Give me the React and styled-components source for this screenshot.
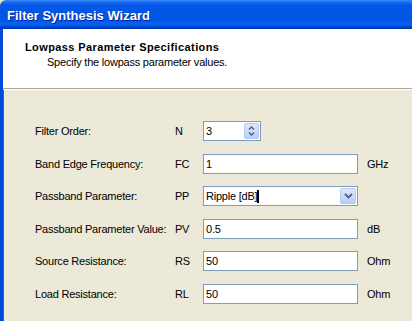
import React from 'react';
import styled, { createGlobalStyle } from 'styled-components';

const GlobalStyle = createGlobalStyle`
  html, body {
    margin: 0;
    padding: 0;
    background: #ece9d8;
  }
  body {
    font-family: 'Liberation Sans', Arial, sans-serif;
    font-size: 11px;
    letter-spacing: -0.22px;
    color: #000;
  }
`;

const rows = [
  { label: 'Filter Order:', abbr: 'N', value: '3', kind: 'spin' },
  { label: 'Band Edge Frequency:', abbr: 'FC', value: '1', unit: 'GHz' },
  { label: 'Passband Parameter:', abbr: 'PP', value: 'Ripple [dB]', kind: 'select' },
  { label: 'Passband Parameter Value:', abbr: 'PV', value: '0.5', unit: 'dB' },
  { label: 'Source Resistance:', abbr: 'RS', value: '50', unit: 'Ohm' },
  { label: 'Load Resistance:', abbr: 'RL', value: '50', unit: 'Ohm' },
];

const App = () => (
  <>
    <GlobalStyle />
    <Window>
      <TitleBar>Filter Synthesis Wizard</TitleBar>
      <Content>
        <Header>
          <HeaderTitle>Lowpass Parameter Specifications</HeaderTitle>
          <HeaderSub>Specify the lowpass parameter values.</HeaderSub>
        </Header>
        <Separator />
        <Body>
          <Form>
            {rows.map((row) => (
              <React.Fragment key={row.abbr}>
                <Label>{row.label}</Label>
                <Abbr>{row.abbr}</Abbr>
                {row.kind === 'spin' ? (
                  <Field $width={58}>
                    <FieldText>{row.value}</FieldText>
                    <SpinButton>
                      <svg width="7" height="12" viewBox="0 0 7 12">
                        <path d="M1 4.5 L3.5 2 L6 4.5" fill="none" stroke="#4d6185" strokeWidth="1.4" />
                        <path d="M1 7.5 L3.5 10 L6 7.5" fill="none" stroke="#4d6185" strokeWidth="1.4" />
                      </svg>
                    </SpinButton>
                  </Field>
                ) : row.kind === 'select' ? (
                  <Field $width={155}>
                    <FieldText>
                      {row.value}
                      <Caret />
                    </FieldText>
                    <DropButton>
                      <svg width="9" height="6" viewBox="0 0 9 6">
                        <path d="M1 1 L4.5 4.5 L8 1" fill="none" stroke="#4d6185" strokeWidth="1.8" />
                      </svg>
                    </DropButton>
                  </Field>
                ) : (
                  <Field $width={155}>
                    <FieldText>{row.value}</FieldText>
                  </Field>
                )}
                <Unit>{row.unit || ''}</Unit>
              </React.Fragment>
            ))}
          </Form>
        </Body>
      </Content>
    </Window>
  </>
);

const Window = styled.div`
  width: 412px;
  height: 321px;
  display: flex;
  flex-direction: column;
  overflow: hidden;
  background: #ece9d8;
`;

const TitleBar = styled.div`
  height: 29px;
  flex: none;
  display: flex;
  align-items: center;
  padding-left: 7px;
  padding-top: 1px;
  box-sizing: border-box;
  color: #fff;
  font-weight: bold;
  font-size: 13px;
  letter-spacing: 0;
  text-shadow: 1px 1px 0 #0a1f8f;
  background: linear-gradient(
    to bottom,
    #3d8bf7 0px,
    #1b6ef5 2px,
    #0458e6 5px,
    #0055e5 20px,
    #0a62f3 24px,
    #0050dc 26px,
    #003ec0 28px,
    #0035a8 29px
  );
  border-top-left-radius: 6px;
`;

const Content = styled.div`
  flex: 1;
  display: flex;
  flex-direction: column;
  border-left: 3px solid #0048d8;
  box-shadow: inset 1px 0 0 #166aee;
`;

const Header = styled.div`
  height: 59px;
  flex: none;
  background: #fff;
  padding: 11px 0 0 22px;
  box-sizing: border-box;
`;

const HeaderTitle = styled.div`
  font-weight: bold;
  font-size: 11px;
  letter-spacing: 0.4px;
  line-height: 14px;
`;

const HeaderSub = styled.div`
  padding-left: 22px;
  line-height: 14px;
  margin-top: 1px;
`;

const Separator = styled.div`
  height: 1px;
  flex: none;
  background: #aca899;
  border-bottom: 1px solid #fff;
`;

const Body = styled.div`
  flex: 1;
  padding: 31px 0 0 32px;
`;

const Form = styled.div`
  display: grid;
  grid-template-columns: 140px 28px 164px auto;
  grid-auto-rows: 20px;
  row-gap: 12.6px;
  align-items: center;
`;

const Label = styled.div`
  white-space: nowrap;
`;

const Abbr = styled.div``;

const Field = styled.div`
  width: ${(p) => p.$width}px;
  height: 20px;
  box-sizing: border-box;
  border: 1px solid #7f9db9;
  background: #fff;
  display: flex;
  align-items: center;
`;

const FieldText = styled.div`
  flex: 1;
  padding-left: 2px;
  display: flex;
  align-items: center;
`;

const Caret = styled.span`
  display: inline-block;
  width: 2px;
  height: 13px;
  background: #000;
`;

const SpinButton = styled.div`
  width: 15px;
  height: 16px;
  margin-right: 1px;
  border-radius: 2px;
  background: linear-gradient(to bottom, #dde8fd, #b9cdf6);
  border: 1px solid #b5c8f2;
  box-sizing: border-box;
  display: flex;
  align-items: center;
  justify-content: center;
`;

const DropButton = styled.div`
  width: 16px;
  height: 16px;
  margin-right: 1px;
  border-radius: 2px;
  background: linear-gradient(to bottom, #dde8fd, #b9cdf6);
  border: 1px solid #b5c8f2;
  box-sizing: border-box;
  display: flex;
  align-items: center;
  justify-content: center;
`;

const Unit = styled.div``;

export default App;
